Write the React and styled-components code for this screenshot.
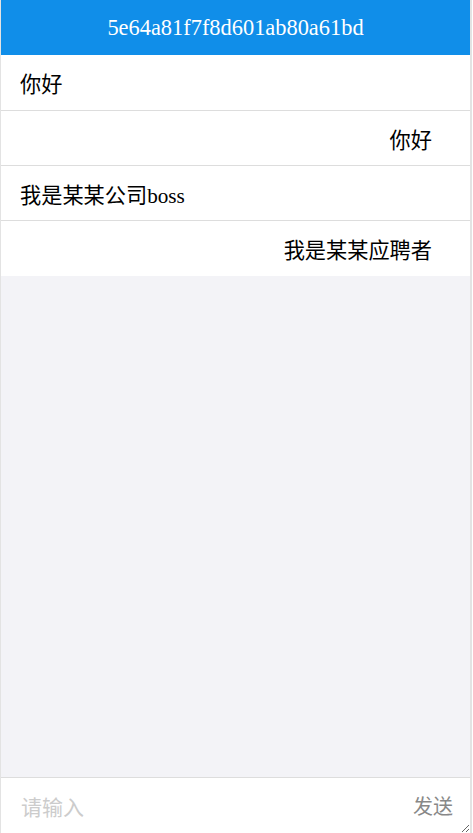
import React from 'react'
import styled, { createGlobalStyle } from 'styled-components'

const GlobalStyle = createGlobalStyle`
  html, body {
    margin: 0;
    padding: 0;
    background: #fff;
  }
  body {
    font-family: 'Liberation Serif', 'Noto Sans CJK SC', serif;
    overflow: hidden;
  }
`

const messages = [
  { id: 1, text: '你好', mine: false },
  { id: 2, text: '你好', mine: true },
  { id: 3, text: '我是某某公司boss', mine: false },
  { id: 4, text: '我是某某应聘者', mine: true },
]

const Page = styled.div`
  width: 469px;
  height: 833px;
  display: flex;
  flex-direction: column;
  border-left: 1px solid #e3e3e3;
  border-right: 2px solid #e3e3e3;
  box-sizing: content-box;
  background: #f3f3f7;
`

const NavBar = styled.header`
  height: 55px;
  flex: none;
  display: flex;
  align-items: center;
  justify-content: center;
  background: #108ee9;
  color: #fff;
  font-size: 22.4px;
`

const List = styled.ul`
  margin: 0;
  padding: 0;
  list-style: none;
  background: #fff;
`

const Item = styled.li`
  height: 55px;
  box-sizing: border-box;
  display: flex;
  align-items: center;
  justify-content: ${p => (p.$mine ? 'flex-end' : 'flex-start')};
  padding: 0 38px 0 19px;
  border-bottom: 1px solid #ddd;
  font-size: 21.2px;
  color: #000;
  &:first-child {
    height: 56px;
  }
  &:last-child {
    border-bottom: none;
  }
`

const Spacer = styled.div`
  flex: 1;
`

const Footer = styled.div`
  position: relative;
  height: 55px;
  flex: none;
  border-top: 1px solid #ddd;
  background: #fff;
  display: flex;
`

const Input = styled.textarea`
  flex: 1;
  margin: 0;
  border: none;
  outline: none;
  padding: 13px 80px 0 20px;
  font-family: 'Liberation Serif', 'Noto Sans CJK SC', serif;
  font-size: 21px;
  color: #000;
  background: #fff;
  &::placeholder {
    color: #ccc;
  }
`

const Send = styled.span`
  position: absolute;
  right: 17px;
  top: 13px;
  font-size: 20px;
  color: #888;
`

export default function App() {
  return (
    <>
      <GlobalStyle />
      <Page>
        <NavBar>5e64a81f7f8d601ab80a61bd</NavBar>
        <List>
          {messages.map(m => (
            <Item key={m.id} $mine={m.mine}>
              {m.text}
            </Item>
          ))}
        </List>
        <Spacer />
        <Footer>
          <Input placeholder='请输入' />
          <Send>发送</Send>
        </Footer>
      </Page>
    </>
  )
}
